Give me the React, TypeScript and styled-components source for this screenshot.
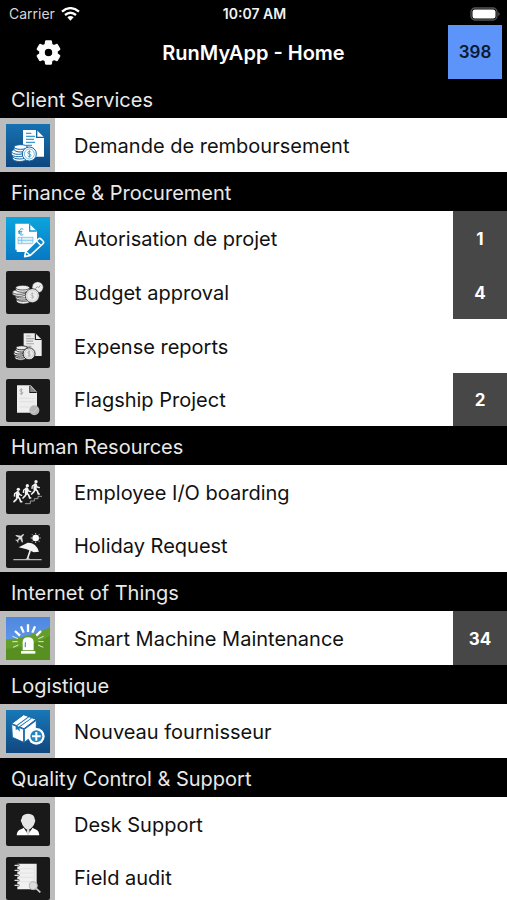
import React, { ReactNode } from "react";
import styled, { createGlobalStyle } from "styled-components";
import { MdSettings } from "react-icons/md";

const GlobalStyle = createGlobalStyle`
  *, *::before, *::after { box-sizing: border-box; }
  html { scrollbar-width: none; }
  body {
    margin: 0;
    background: #000;
    font-family: Inter, Roboto, sans-serif;
  }
`;

const Page = styled.div`
  min-height: 100vh;
  display: flex;
  flex-direction: column;
`;

const StatusBar = styled.div`
  display: grid;
  grid-template-columns: 1fr auto 1fr;
  align-items: center;
  height: 25px;
  padding: 2px 7px 0 9px;
  color: #f2f2f2;
  font-size: 15px;
  line-height: 16px;
`;

const Carrier = styled.span`
  display: flex;
  align-items: center;
  gap: 6px;
  color: #d6d6d6;
  font-size: 14px;
`;

const Clock = styled.time`
  font-size: 14px;
  font-weight: 600;
`;

const BatterySlot = styled.span`
  display: flex;
  justify-content: flex-end;
`;

const Header = styled.header`
  display: grid;
  grid-template-columns: 1fr auto 1fr;
  align-items: center;
  height: 54px;
  padding: 0 5px;
`;

const SettingsButton = styled.button`
  display: flex;
  justify-self: start;
  margin-left: 29px;
  padding: 0;
  border: 0;
  background: none;
  color: #fff;
  cursor: pointer;
`;

const GearIcon = styled(MdSettings)`
  width: 29px;
  height: 29px;
  stroke: currentColor;
  stroke-width: 1px;
  stroke-linejoin: round;

  path[fill="none"] {
    stroke: none;
  }
`;

const Title = styled.h1`
  margin: 0;
  padding-top: 1px;
  color: #fff;
  font-size: 20px;
  font-weight: 600;
  line-height: 24px;
`;

const TotalButton = styled.button`
  justify-self: end;
  width: 54px;
  height: 54px;
  padding: 0;
  border: 0;
  background: #5c94fa;
  color: #0b1a30;
  font: 600 17px/24px Inter, Roboto, sans-serif;
  cursor: pointer;
`;

const SectionTitle = styled.h2`
  height: 39px;
  margin: 0;
  padding: 1px 11px 0;
  background: #000;
  color: #e9e9e9;
  font-size: 20px;
  font-weight: 400;
  line-height: 40px;
`;

const List = styled.ul`
  margin: 0;
  padding: 0;
  list-style: none;
`;

const Item = styled.li`
  height: 54px;

  & + &:last-child {
    height: 53px;
  }
`;

const ItemLink = styled.a`
  display: flex;
  height: 100%;
  background: #fff;
  color: #111;
  text-decoration: none;
`;

const IconRail = styled.span`
  flex: none;
  width: 55px;
  padding: 6px 0 0 6px;
  background: #bcbcbc;
`;

const Tile = styled.svg<{ $rounded?: boolean }>`
  display: block;
  width: 44px;
  height: 43px;
  border-radius: ${(p) => (p.$rounded ? "2px" : "0")};
`;

const Label = styled.span`
  flex: 1;
  align-self: center;
  padding: 1px 0 0 19px;
  font-size: 20px;
  line-height: 24px;
`;

const Count = styled.span`
  display: flex;
  flex: none;
  align-items: center;
  justify-content: center;
  width: 54px;
  padding-top: 1px;
  background: #474747;
  color: #fff;
  font-size: 17px;
  font-weight: 700;
`;

type Palette = { paper: string; line: string; ground: string };
const mono: Palette = { paper: "#ececec", line: "#a6a6a6", ground: "#191919" };
const blue: Palette = { paper: "#ffffff", line: "#3d9bd0", ground: "#1465a4" };

function Dark({ children }: { children: ReactNode }) {
  return (
    <Tile viewBox="0 0 132 129" $rounded aria-hidden="true">
      <rect width="132" height="129" fill="#191919" />
      {children}
    </Tile>
  );
}

function Gradient({ id, from, to, children }: { id: string; from: string; to: string; children: ReactNode }) {
  return (
    <Tile viewBox="0 0 132 129" aria-hidden="true">
      <defs>
        <linearGradient id={id} x1="0" y1="0" x2="0" y2="1">
          <stop offset="0" stopColor={from} />
          <stop offset="1" stopColor={to} />
        </linearGradient>
      </defs>
      <rect width="132" height="129" fill={`url(#${id})`} />
      {children}
    </Tile>
  );
}

function Dollar({ x, y, s, color }: { x: number; y: number; s: number; color: string }) {
  return (
    <g transform={`translate(${x} ${y}) scale(${s})`} fill="none" stroke={color} strokeWidth="3">
      <path d="M5 -5 C4 -9 -5 -9 -5 -4 C-5 1 5 -1 5 4 C5 9 -4 9 -5 5 M0 -11 V11" />
    </g>
  );
}

function DocumentCoins({ c }: { c: Palette }) {
  return (
    <>
      <path d="M51 18 H92 L114 40 V98 H51 Z" fill={c.paper} />
      <path d="M92 18 V40 H114" fill="none" stroke={c.ground} strokeWidth="4" />
      <path d="M60 28 H76 M60 37 H87 M60 46 H84 M60 55 H87 M60 64 H78" stroke={c.line} strokeWidth="4" />
      <g fill={c.paper} stroke={c.ground} strokeWidth="3">
        <path d="M20 96 v8 a20 8 0 0 0 42 0 v-8z" />
        <ellipse cx="41" cy="97" rx="21" ry="8" />
        <path d="M16 83 v7 a20 8 0 0 0 41 0 v-7z" />
        <ellipse cx="37" cy="83" rx="20" ry="8" />
        <path d="M24 70 v6 a20 8 0 0 0 40 0 v-6z" />
        <ellipse cx="44" cy="69" rx="20" ry="7" />
        <circle cx="70" cy="90" r="21" />
      </g>
      <circle cx="70" cy="90" r="15" fill="none" stroke={c.line} strokeWidth="2" />
      <Dollar x={70} y={90} s={1} color={c.line} />
    </>
  );
}

function Refund() {
  return (
    <Gradient id="refund" from="#1672b2" to="#10477f">
      <DocumentCoins c={blue} />
    </Gradient>
  );
}

function ProjectApproval() {
  return (
    <Gradient id="project" from="#0ca5dc" to="#0878c4">
      <path d="M28 20 H70 L93 43 V75 L62 105 H32 V98 H28 Z" fill="#fff" />
      <path d="M71 21 V42 H92" fill="none" stroke="#109bd7" strokeWidth="4" />
      <path d="M52 37 C46 33 40 37 40 45 C40 53 46 57 52 52 M36 43 H49 M36 48 H48" fill="none" stroke="#279dd5" strokeWidth="3" />
      <path d="M36 61 H81 V80 H36 Z M36 70 H81 M47 61 V80" fill="#def2fb" stroke="#5bb5df" strokeWidth="2" />
      <path d="M59 104 L97 66 Q101 62 106 67 L111 72 Q115 76 110 81 L73 115 L56 119 Z" fill="#0c86cc" stroke="#fff" strokeWidth="5" strokeLinejoin="round" />
      <path d="M92 73 L104 85 M60 104 L72 115" stroke="#fff" strokeWidth="4" />
    </Gradient>
  );
}

function Coins() {
  return (
    <Dark>
      <g fill={mono.paper} stroke={mono.ground} strokeWidth="2">
        <path d="M31 84 v6 a21 9 0 0 0 42 0 v-6z" />
        <ellipse cx="52" cy="84" rx="21" ry="7" />
        <path d="M28 74 v5 a20 8 0 0 0 41 0 v-5z" />
        <ellipse cx="48" cy="74" rx="21" ry="7" />
        <path d="M19 63 v5 a20 8 0 0 0 41 0 v-5z" />
        <ellipse cx="40" cy="63" rx="21" ry="7" />
        <path d="M29 50 v6 a21 8 0 0 0 42 0 v-6z" />
        <ellipse cx="50" cy="50" rx="21" ry="7" />
        <circle cx="95" cy="49" r="17" />
        <circle cx="79" cy="74" r="21" />
      </g>
      <circle cx="79" cy="74" r="16" fill="none" stroke="#c4c4c4" strokeWidth="2" />
      <path d="M88 53 l6 -6 4 3 5 -7" fill="none" stroke="#999" strokeWidth="3" />
      <Dollar x={79} y={74} s={0.9} color="#b4b4b4" />
    </Dark>
  );
}

function Expenses() {
  return (
    <Dark>
      <g transform="translate(9 9) scale(.86)">
        <DocumentCoins c={mono} />
      </g>
    </Dark>
  );
}

function Flagship() {
  return (
    <Dark>
      <path d="M33 19 H74 L93 39 V101 H33 Z" fill="#eeeeee" />
      <path d="M72 20 V40 H92" fill="none" stroke="#191919" strokeWidth="4" />
      <path d="M73 21 L91 39 H73 Z" fill="#888" />
      <Dollar x={46} y={38} s={0.9} color="#a4a4a4" />
      <path d="M40 58 H85 M40 68 H85 M40 84 H70" stroke="#dadada" strokeWidth="2" />
      <circle cx="85" cy="94" r="15" fill="#b9b9b9" />
      <path d="M76 96 l6 6 12 -15" fill="none" stroke="#d0d0d0" strokeWidth="3" />
    </Dark>
  );
}

function Walker({ x, y }: { x: number; y: number }) {
  return (
    <g transform={`translate(${x} ${y})`} stroke="#f2f2f2" strokeLinecap="round" strokeLinejoin="round" fill="none">
      <circle cx="2" cy="-17" r="5" fill="#f2f2f2" stroke="none" />
      <path d="M0 -7 L-1 5" strokeWidth="10" />
      <path d="M-1 -9 L-9 -4 L-10 3 M2 -8 L6 -1 L12 1" strokeWidth="4" />
      <path d="M-1 6 L-4 13 L-11 20 M0 5 L6 11 L9 20 H12" strokeWidth="5" />
    </g>
  );
}

function Boarding() {
  return (
    <Dark>
      <Walker x={35} y={72} />
      <Walker x={62} y={61} />
      <Walker x={88} y={49} />
      <path d="M57 98 H73 V90 H85 V83 H96 V76 H108" fill="none" stroke="#9a9a9a" strokeWidth="3" />
    </Dark>
  );
}

function Holiday() {
  return (
    <Dark>
      <g transform="translate(43 38) rotate(45) scale(.85)" fill="#d8d8d8">
        <path d="M0 -18 Q4 -16 3 -6 L17 4 V8 L3 4 L2 12 L7 17 V19 L0 17 L-7 19 V17 L-2 12 L-3 4 L-17 8 V4 L-3 -6 Q-4 -16 0 -18 Z" />
      </g>
      <circle cx="89" cy="39" r="10" fill="#fff" />
      <path d="M89 24 V28 M89 50 V54 M74 39 H78 M100 39 H104 M78 28 L81 31 M97 47 L100 50 M78 50 L81 47 M97 31 L100 28" stroke="#d0d0d0" strokeWidth="3" />
      <path d="M38 67 L65 53 Q90 52 99 80 L84 82 L62 73 Z" fill="#f4f4f4" />
      <path d="M73 75 L64 103" stroke="#ededed" strokeWidth="5" />
      <path d="M22 104 H107" stroke="#b3b3b3" strokeWidth="4" />
      <path d="M57 103 Q65 97 74 103" fill="#ddd" />
    </Dark>
  );
}

function Siren() {
  return (
    <Gradient id="siren" from="#4e87df" to="#6ba2f0">
      <path d="M0 67 C37 67 87 51 132 31 V129 H0 Z" fill="#659e27" />
      <path d="M0 95 C40 94 92 80 132 56 V129 H0 Z" fill="#578f20" />
      <path d="M50 100 V75 Q50 61 66 61 Q83 61 83 75 V100 Z" fill="#fff" />
      <path d="M56 91 V80 Q56 74 60 74 V91 Z" fill="#5b93ea" />
      <path d="M45 102 H88 V110 H45 Z" fill="#fff" />
      <g stroke="#fff" strokeLinecap="butt">
        <path d="M66 22 V45 M45 28 L53 47 M87 28 L79 47 M27 42 L42 56 M105 42 L91 56" strokeWidth="7" />
        <path d="M19 58 L36 65 M113 58 L97 65 M19 74 H35 M97 74 H113 M21 91 L37 84 M112 91 L96 84" strokeWidth="3" opacity=".8" />
      </g>
    </Gradient>
  );
}

function Supplier() {
  return (
    <Gradient id="supplier" from="#1878b8" to="#10477f">
      <g fill="#fff" stroke="#1768a8" strokeWidth="3" strokeLinejoin="round">
        <path d="M17 41 L53 14 L90 28 L54 56 Z" />
        <path d="M17 43 L53 58 V97 L19 82 Z" />
        <path d="M55 58 L91 31 V70 L55 97 Z" />
      </g>
      <path d="M29 47 L66 20 L78 25 L41 52 V65 L35 58 L29 60 Z" fill="#1e75b3" />
      <path d="M34 47 L69 22 L74 25 L38 50 Z" fill="#fff" />
      <circle cx="91" cy="79" r="25" fill="#fff" />
      <circle cx="91" cy="79" r="18" fill="#2485c2" />
      <path d="M91 66 V92 M78 79 H104" stroke="#fff" strokeWidth="6" />
    </Gradient>
  );
}

function Support() {
  return (
    <Dark>
      <path d="M32 97 Q33 82 45 79 L57 73 H76 L88 79 Q99 82 100 97 Z" fill="#fff" />
      <path d="M54 76 L66 94 L79 76 L75 68 H58 Z" fill="#191919" />
      <path d="M47 47 Q47 33 66 32 Q86 33 86 48 Q90 51 86 59 Q83 72 66 82 Q50 72 47 59 Q42 51 47 47 Z" fill="#e6e6e6" />
      <path d="M62 83 L67 78 L71 83 L69 96 H64 Z" fill="#ddd" />
    </Dark>
  );
}

function Audit() {
  return (
    <Dark>
      <path d="M34 20 H92 V97 H34 Z" fill="#f0f0f0" />
      <path d="M85 21 V96 M41 35 H83 M41 48 H83 M41 61 H83 M41 74 H78" stroke="#dcdcdc" strokeWidth="2" />
      <path d="M27 25 H37 M27 40 H37 M27 55 H37 M27 70 H37 M27 85 H37" stroke="#191919" strokeWidth="7" strokeLinecap="round" />
      <path d="M27 25 H37 M27 40 H37 M27 55 H37 M27 70 H37 M27 85 H37" stroke="#dedede" strokeWidth="4" strokeLinecap="round" />
      <circle cx="82" cy="86" r="12" fill="#ddd" stroke="#b4b4b4" strokeWidth="3" />
      <path d="M91 95 L103 106" stroke="#cfcfcf" strokeWidth="5" />
    </Dark>
  );
}

type Entry = { label: string; icon: ReactNode; count?: number };
type Section = { title: string; entries: Entry[] };

const sections: Section[] = [
  { title: "Client Services", entries: [{ label: "Demande de remboursement", icon: <Refund /> }] },
  {
    title: "Finance & Procurement",
    entries: [
      { label: "Autorisation de projet", icon: <ProjectApproval />, count: 1 },
      { label: "Budget approval", icon: <Coins />, count: 4 },
      { label: "Expense reports", icon: <Expenses /> },
      { label: "Flagship Project", icon: <Flagship />, count: 2 },
    ],
  },
  {
    title: "Human Resources",
    entries: [
      { label: "Employee I/O boarding", icon: <Boarding /> },
      { label: "Holiday Request", icon: <Holiday /> },
    ],
  },
  { title: "Internet of Things", entries: [{ label: "Smart Machine Maintenance", icon: <Siren />, count: 34 }] },
  { title: "Logistique", entries: [{ label: "Nouveau fournisseur", icon: <Supplier /> }] },
  {
    title: "Quality Control & Support",
    entries: [
      { label: "Desk Support", icon: <Support /> },
      { label: "Field audit", icon: <Audit /> },
    ],
  },
];

function Wifi() {
  return (
    <svg width="19" height="14" viewBox="0 0 57 42" fill="none" stroke="#fff" strokeWidth="7" aria-hidden="true">
      <path d="M3 14 Q28 -7 54 14" />
      <path d="M12 24 Q28 10 45 24" />
      <path d="M19 31 Q28 23 38 31 L28 41 Z" fill="#fff" stroke="none" />
    </svg>
  );
}

function Battery() {
  return (
    <svg width="30" height="14" viewBox="0 0 30 14" aria-hidden="true">
      <rect x="1" y="1" width="26" height="12" rx="4" fill="#000" stroke="#555" strokeWidth="1.3" />
      <rect x="2.5" y="2.5" width="23" height="9" rx="2.5" fill="#fff" />
      <path d="M28.3 5 Q31 7 28.3 9 Z" fill="#666" />
    </svg>
  );
}

export default function App() {
  return (
    <Page>
      <GlobalStyle />
      <StatusBar>
        <Carrier>
          Carrier
          <Wifi />
        </Carrier>
        <Clock>10:07 AM</Clock>
        <BatterySlot>
          <Battery />
        </BatterySlot>
      </StatusBar>
      <Header>
        <SettingsButton type="button" aria-label="Settings">
          <GearIcon />
        </SettingsButton>
        <Title>RunMyApp - Home</Title>
        <TotalButton type="button">398</TotalButton>
      </Header>
      <main>
        {sections.map((section) => (
          <section key={section.title}>
            <SectionTitle>{section.title}</SectionTitle>
            <List>
              {section.entries.map((entry) => (
                <Item key={entry.label}>
                  <ItemLink href="#">
                    <IconRail>{entry.icon}</IconRail>
                    <Label>{entry.label}</Label>
                    {entry.count !== undefined && <Count>{entry.count}</Count>}
                  </ItemLink>
                </Item>
              ))}
            </List>
          </section>
        ))}
      </main>
    </Page>
  );
}
